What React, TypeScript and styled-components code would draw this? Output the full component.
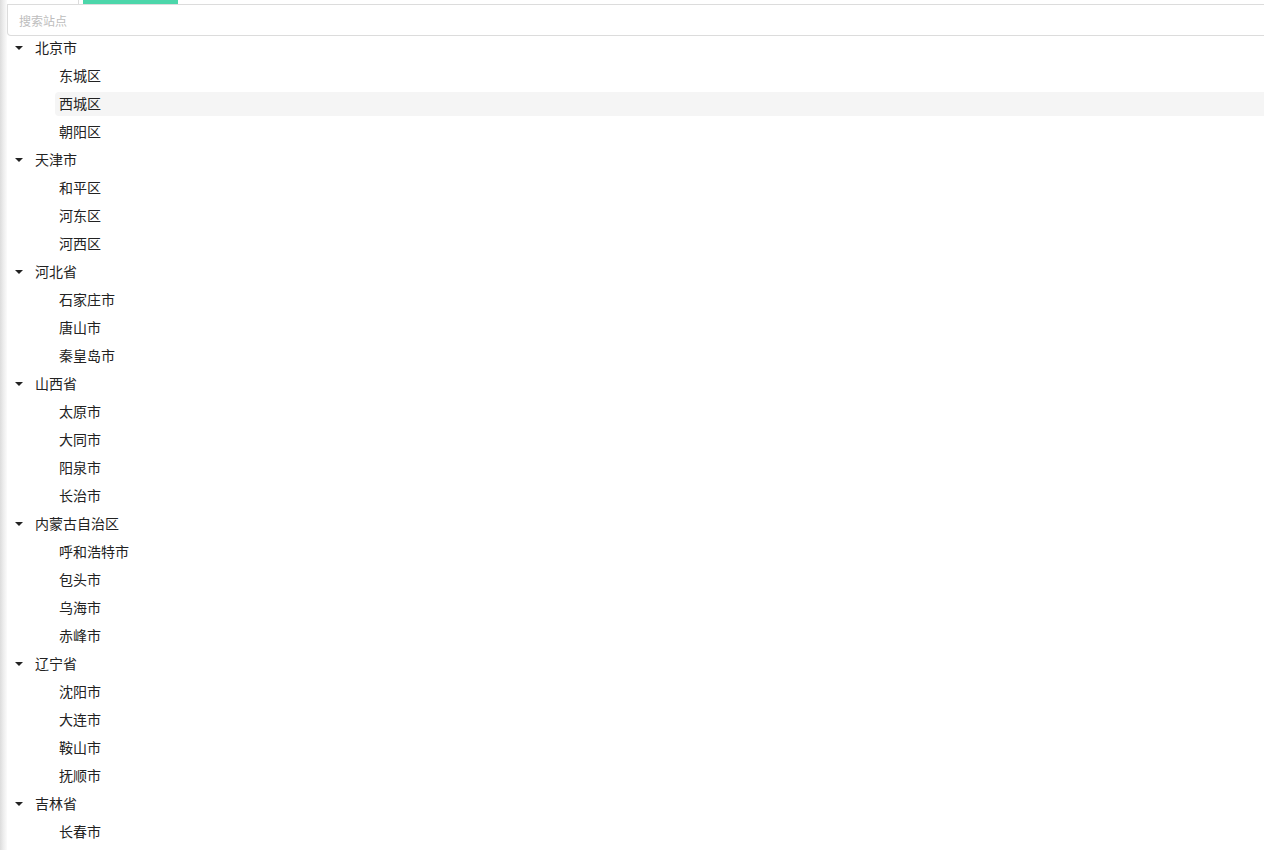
import React from 'react'
import styled, { createGlobalStyle } from 'styled-components'

const GlobalStyle = createGlobalStyle`
  html, body {
    margin: 0;
    padding: 0;
    background: #fff;
  }
  body {
    font-family: "Liberation Sans", "Noto Sans CJK SC", sans-serif;
    font-size: 14px;
    color: #222;
    overflow: hidden;
  }
`

const Shell = styled.div`
  display: flex;
  height: 850px;
  overflow: hidden;
`

const EdgeShadow = styled.div`
  flex: 0 0 7px;
  background: linear-gradient(to right, #dcdcdc 0%, #ececec 45%, #fbfbfb 100%);
`

const Main = styled.div`
  flex: 1;
  min-width: 0;
  overflow: hidden;
`

const TabBar = styled.div`
  display: flex;
  height: 4px;
  border-bottom: 1px solid #dcdcdc;
  margin-left: -7px;
`

const Tab = styled.div<{ $active?: boolean; $width: number }>`
  width: ${p => p.$width}px;
  margin-right: 4px;
  background: ${p => (p.$active ? '#4cd6aa' : '#fff')};
  border-right: ${p => (p.$active ? 'none' : '1px solid #dcdcdc')};
`

const SearchBox = styled.input`
  display: block;
  box-sizing: border-box;
  width: calc(100% + 8px);
  height: 31px;
  margin: 0;
  padding: 3px 11px 0;
  border: 1px solid #dcdcdc;
  border-top: none;
  border-radius: 0 0 0 4px;
  outline: none;
  font-family: "Liberation Sans", "Noto Sans CJK SC", sans-serif;
  font-size: 12px;
  color: #333;
  background: #fff;
  &::placeholder {
    color: #bdbdbd;
  }
`

const Tree = styled.div`
  display: flex;
  flex-direction: column;
  width: calc(100% + 8px);
`

const Node = styled.div`
  display: flex;
  align-items: center;
  padding-bottom: 4px;
`

const Indent = styled.span`
  flex: 0 0 24px;
`

const Switcher = styled.span`
  flex: 0 0 24px;
  height: 24px;
  display: flex;
  align-items: center;
  justify-content: center;
`

const Caret = styled.span`
  width: 0;
  height: 0;
  border-left: 4px solid transparent;
  border-right: 4px solid transparent;
  border-top: 4px solid #222;
  margin-left: -1px;
`

const Title = styled.span<{ $hover?: boolean }>`
  flex: 1;
  height: 24px;
  line-height: 24px;
  padding: 0 4px;
  border-radius: 4px;
  background: ${p => (p.$hover ? '#f5f5f5' : 'transparent')};
  white-space: nowrap;
`

const regions: { name: string; children: string[] }[] = [
  { name: '北京市', children: ['东城区', '西城区', '朝阳区'] },
  { name: '天津市', children: ['和平区', '河东区', '河西区'] },
  { name: '河北省', children: ['石家庄市', '唐山市', '秦皇岛市'] },
  { name: '山西省', children: ['太原市', '大同市', '阳泉市', '长治市'] },
  { name: '内蒙古自治区', children: ['呼和浩特市', '包头市', '乌海市', '赤峰市'] },
  { name: '辽宁省', children: ['沈阳市', '大连市', '鞍山市', '抚顺市'] },
  { name: '吉林省', children: ['长春市'] },
]

export default function App() {
  return (
    <>
      <GlobalStyle />
      <Shell>
        <EdgeShadow />
        <Main>
          <TabBar>
            <Tab $width={78} />
            <Tab $width={95} $active />
          </TabBar>
          <SearchBox placeholder="搜索站点" />
          <Tree>
            {regions.map(r => (
              <React.Fragment key={r.name}>
                <Node>
                  <Switcher>
                    <Caret />
                  </Switcher>
                  <Title>{r.name}</Title>
                </Node>
                {r.children.map(c => (
                  <Node key={c}>
                    <Indent />
                    <Switcher />
                    <Title $hover={c === '西城区'}>{c}</Title>
                  </Node>
                ))}
              </React.Fragment>
            ))}
          </Tree>
        </Main>
      </Shell>
    </>
  )
}
